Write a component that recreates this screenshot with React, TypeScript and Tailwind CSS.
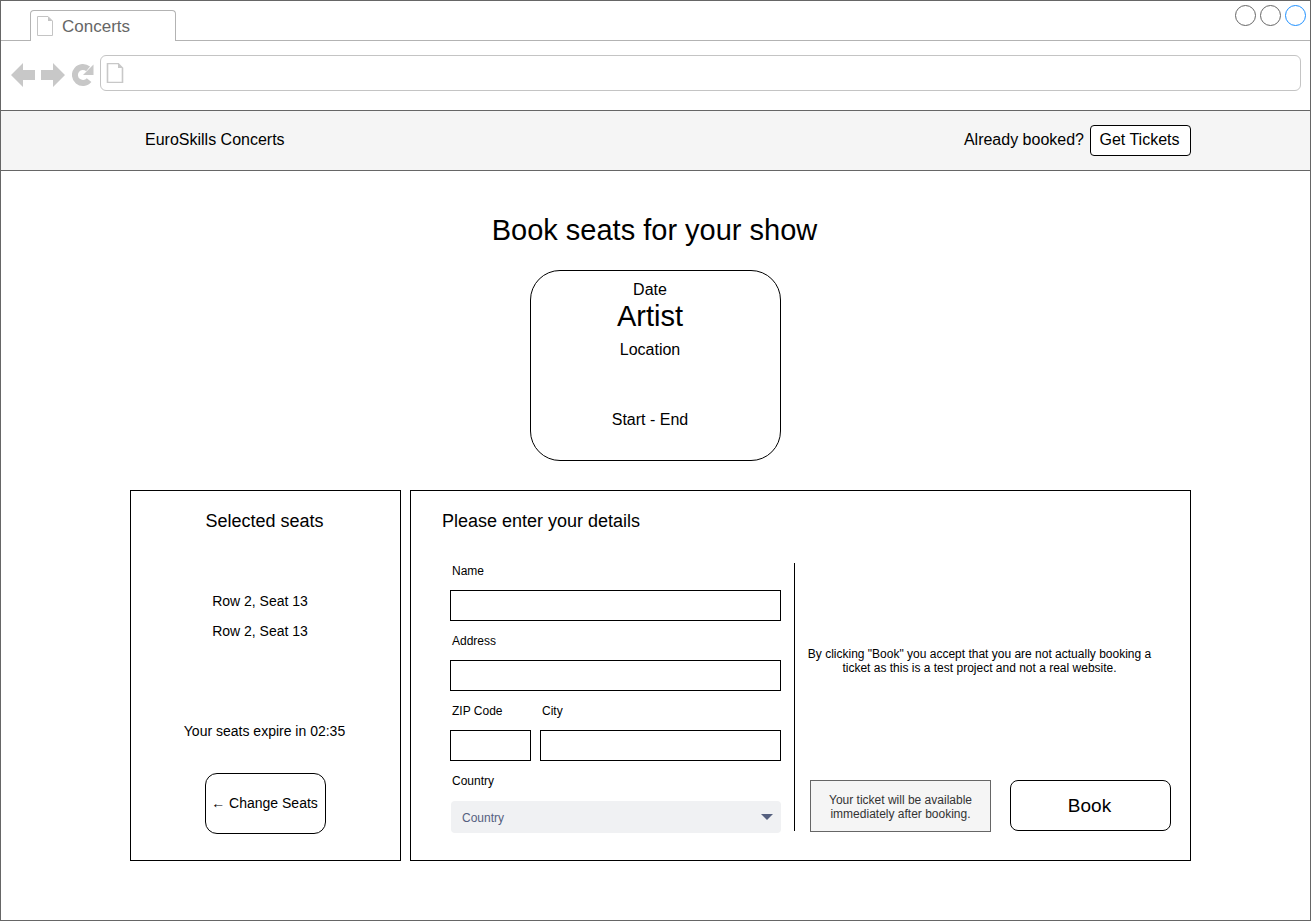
const FONT = "font-['Liberation_Sans',Arial,sans-serif]";

function PageIcon({ w, h, color, sw = 1 }: { w: number; h: number; color: string; sw?: number }) {
  return (
    <svg width={w} height={h} viewBox="0 0 16 20" fill="none" stroke={color} strokeWidth={sw} className="shrink-0">
      <path d="M0.5 0.5H11L15.5 5V19.5H0.5Z" fill="white" />
      <path d="M11 0.5V5H15.5" fill={color} stroke="none" />
    </svg>
  );
}

function Back() {
  return (
    <svg width="24" height="24" viewBox="0 0 24 24" fill="#c8c8c8"><path d="M0 12L12 0V7H24V17H12V24Z" /></svg>
  );
}
function Forward() {
  return (
    <svg width="24" height="24" viewBox="0 0 24 24" fill="#c8c8c8"><path d="M24 12L12 0V7H0V17H12V24Z" /></svg>
  );
}
function Reload() {
  return (
    <svg width="23" height="24" viewBox="0 0 23 24" fill="none">
      <path d="M17.1 17.1A8 8 0 1 1 16.1 5.9" stroke="#c8c8c8" strokeWidth="6" />
      <path d="M21.5 1.5V12H11Z" fill="#c8c8c8" />
    </svg>
  );
}

function Field({ label, w, mt }: { label: string; w: string; mt?: string }) {
  return (
    <div className={`flex flex-col ${w} ${mt ?? ""}`}>
      <div className="h-[14px] pl-[2px] text-[12px] leading-[14px] text-black whitespace-nowrap">{label}</div>
      <div className="mt-[12px] h-[31px] border border-black bg-white" />
    </div>
  );
}

export default function App() {
  return (
    <div className={`${FONT} w-[1311px] h-[921px] bg-white border border-[#666666] text-black overflow-hidden flex flex-col`}>
      <div className="h-[40px] shrink-0 border-b border-[#b3b3b3] flex justify-between">
        <div className="ml-[29px] mt-[9px] w-[146px] h-[31px] border border-b-0 border-[#b3b3b3] rounded-t-[4px] bg-white flex items-center pl-[6px] gap-[9px]">
          <PageIcon w={16} h={20} color="#c4c4c4" />
          <span className="text-[17px] text-[#666666] leading-none">Concerts</span>
        </div>
        <div className="flex gap-[4px] mt-[4px] mr-[4px]">
          <div className="w-[21px] h-[21px] rounded-full border border-[#666666]" />
          <div className="w-[21px] h-[21px] rounded-full border border-[#666666]" />
          <div className="w-[21px] h-[21px] rounded-full border border-[#1e90ff]" />
        </div>
      </div>
      <div className="h-[70px] shrink-0 border-b border-[#666666] flex items-start pt-[14px] pl-[10px]">
        <div className="flex items-center gap-[6px] h-[36px] mt-[2px]">
          <Back />
          <Forward />
          <div className="ml-[1px]"><Reload /></div>
        </div>
        <div className="ml-[5px] w-[1201px] h-[36px] border border-[#c4c4c4] rounded-[6px] flex items-center pl-[5px]">
          <PageIcon w={18} h={20} color="#c8c8c8" sw={1.6} />
        </div>
      </div>

      <div className="h-[60px] shrink-0 bg-[#f5f5f5] border-b border-[#666666] flex items-center justify-between pl-[144px] pr-[119px] pb-[2px]">
        <span className="text-[16px]">EuroSkills Concerts</span>
        <div className="flex items-center gap-[6px]">
          <span className="text-[16px]">Already booked?</span>
          <div className="w-[101px] h-[31px] mt-[2px] bg-white border border-black rounded-[4px] flex items-center justify-center text-[16px] pb-[2px] pr-[2px]">Get Tickets</div>
        </div>
      </div>

      <h1 className="mt-[41px] h-[36px] text-center text-[29px] leading-[36px] pr-[2px]">Book seats for your show</h1>

      <div className="mt-[22px] ml-[529px] w-[251px] h-[191px] border border-black rounded-[30px] flex flex-col items-center pr-[11px]">
        <div className="mt-[10px] h-[18px] text-[16px] leading-[18px]">Date</div>
        <div className="h-[34px] text-[29px] leading-[34px]">Artist</div>
        <div className="mt-[8px] h-[18px] text-[16px] leading-[18px]">Location</div>
        <div className="mt-[52px] h-[18px] text-[16px] leading-[18px]">Start - End</div>
      </div>

      <div className="mt-[29px] ml-[129px] flex gap-[9px] h-[371px]">
        <div className="w-[271px] border border-black flex flex-col items-center">
          <div className="mt-[20px] pr-[2px] h-[20px] text-[18px] leading-[20px]">Selected seats</div>
          <div className="mt-[62px] pr-[11px] text-[14px] leading-[16px] h-[16px]">Row 2, Seat 13</div>
          <div className="mt-[14px] pr-[11px] text-[14px] leading-[16px] h-[16px]">Row 2, Seat 13</div>
          <div className="mt-[84px] pr-[2px] text-[14px] leading-[16px] h-[16px]">Your seats expire in 02:35</div>
          <div className="mt-[34px] w-[121px] h-[61px] border border-black rounded-[12px] flex items-center justify-center text-[14px] pr-[2px]">← Change Seats</div>
        </div>

        <div className="w-[781px] border border-black flex flex-col">
          <div className="mt-[20px] ml-[31px] h-[20px] text-[18px] leading-[20px]">Please enter your details</div>
          <div className="mt-[32px] flex">
            <div className="ml-[39px] w-[331px] pt-[1px] flex flex-col">
              <Field label="Name" w="w-[331px]" />
              <Field label="Address" w="w-[331px]" mt="mt-[13px]" />
              <div className="mt-[13px] flex gap-[9px]">
                <Field label="ZIP Code" w="w-[81px]" />
                <Field label="City" w="w-[241px]" />
              </div>
              <div className="mt-[13px] h-[14px] pl-[2px] text-[12px] leading-[14px]">Country</div>
              <div className="mt-[13px] ml-[1px] h-[32px] rounded-[4px] bg-[#f0f1f3] flex items-center justify-between pl-[11px] pr-[8px] text-[12px] text-[#55607f]">
                <span className="pt-[2px]">Country</span>
                <svg width="12" height="6" viewBox="0 0 12 6" fill="#55607f"><path d="M0 0H12L6 6Z" /></svg>
              </div>
            </div>
            <div className="ml-[13px] w-px h-[268px] bg-black" />
            <div className="ml-[15px] w-[361px] h-[268px] flex flex-col">
              <div className="mt-[84px] ml-[-3px] h-[28px] text-center text-[12px] leading-[14px] w-[345px]">
                By clicking "Book" you accept that you are not actually booking a ticket as this is a test project and not a real website.
              </div>
              <div className="mt-[105px] flex gap-[19px]">
                <div className="w-[181px] h-[52px] border border-[#666666] bg-[#f5f5f5] flex items-center justify-center text-center text-[12px] leading-[14px] text-[#333333] pt-[1px]">
                  Your ticket will be available<br />immediately after booking.
                </div>
                <div className="w-[161px] h-[51px] border border-black rounded-[8px] flex items-center justify-center text-[19px] pt-[2px] pr-[2px]">Book</div>
              </div>
            </div>
          </div>
        </div>
      </div>
    </div>
  );
}
